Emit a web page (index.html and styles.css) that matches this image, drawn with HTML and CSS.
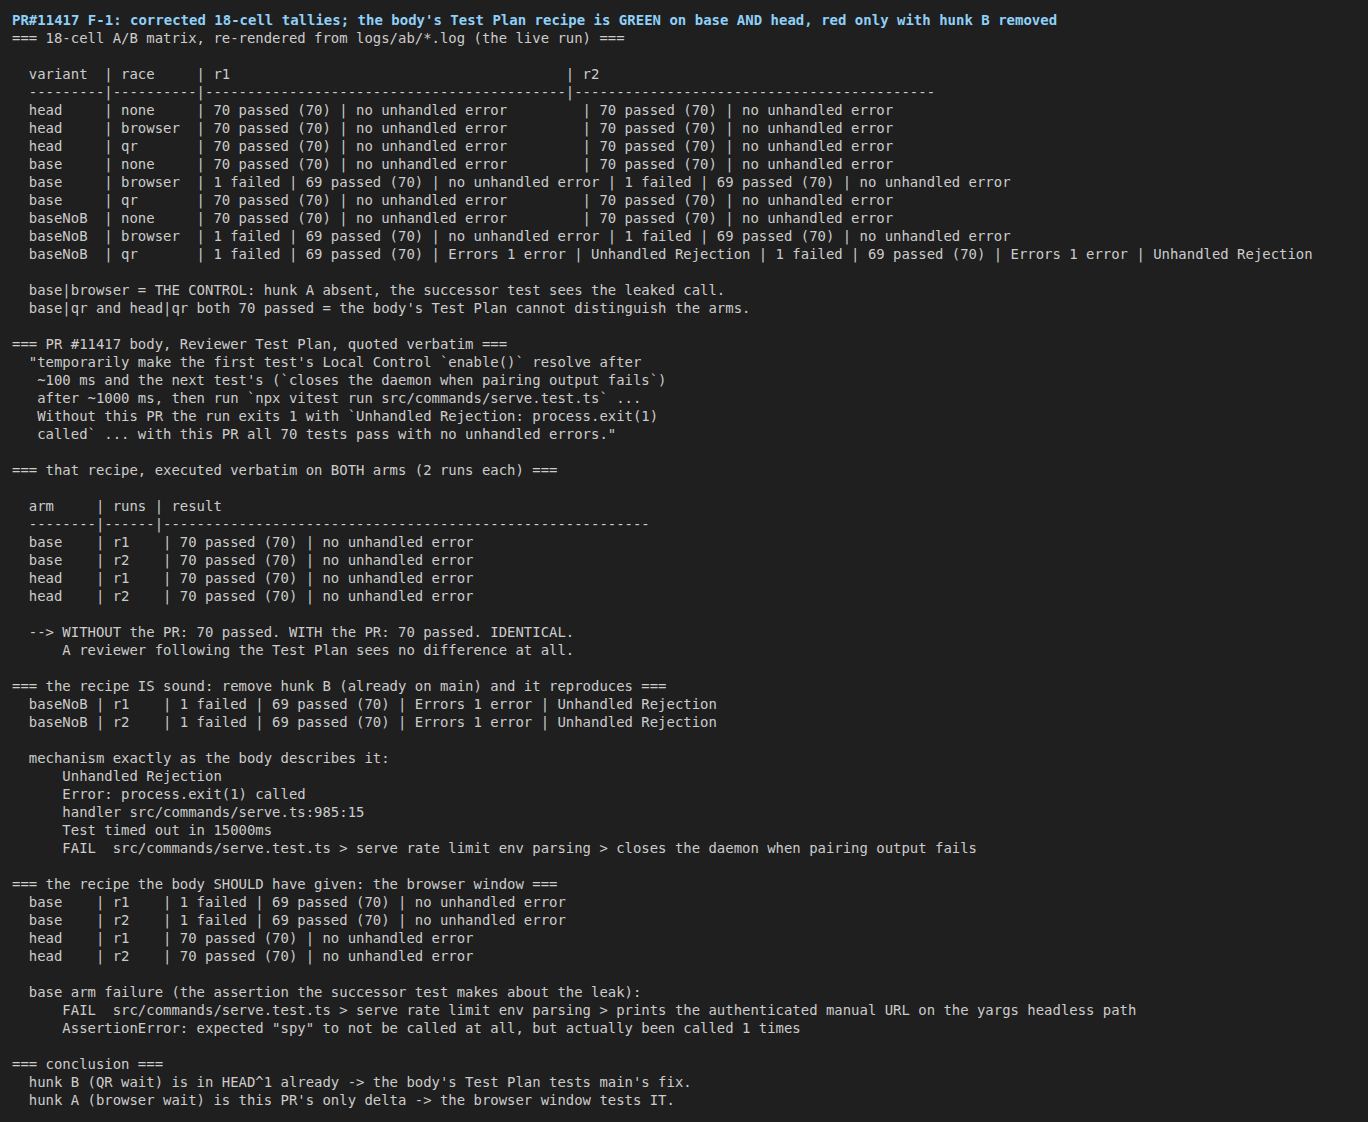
FILE: index.html
```html
<!DOCTYPE html>
<html lang="en">
<head>
<meta charset="utf-8">
<title>PR#11417 F-1</title>
<link rel="stylesheet" href="styles.css">
</head>
<body>
<pre class="log"><span class="title">PR#11417 F-1: corrected 18-cell tallies; the body's Test Plan recipe is GREEN on base AND head, red only with hunk B removed</span>
=== 18-cell A/B matrix, re-rendered from logs/ab/*.log (the live run) ===

  variant  | race     | r1                                        | r2
  ---------|----------|-------------------------------------------|-------------------------------------------
  head     | none     | 70 passed (70) | no unhandled error         | 70 passed (70) | no unhandled error
  head     | browser  | 70 passed (70) | no unhandled error         | 70 passed (70) | no unhandled error
  head     | qr       | 70 passed (70) | no unhandled error         | 70 passed (70) | no unhandled error
  base     | none     | 70 passed (70) | no unhandled error         | 70 passed (70) | no unhandled error
  base     | browser  | 1 failed | 69 passed (70) | no unhandled error | 1 failed | 69 passed (70) | no unhandled error
  base     | qr       | 70 passed (70) | no unhandled error         | 70 passed (70) | no unhandled error
  baseNoB  | none     | 70 passed (70) | no unhandled error         | 70 passed (70) | no unhandled error
  baseNoB  | browser  | 1 failed | 69 passed (70) | no unhandled error | 1 failed | 69 passed (70) | no unhandled error
  baseNoB  | qr       | 1 failed | 69 passed (70) | Errors 1 error | Unhandled Rejection | 1 failed | 69 passed (70) | Errors 1 error | Unhandled Rejection

  base|browser = THE CONTROL: hunk A absent, the successor test sees the leaked call.
  base|qr and head|qr both 70 passed = the body's Test Plan cannot distinguish the arms.

=== PR #11417 body, Reviewer Test Plan, quoted verbatim ===
  "temporarily make the first test's Local Control `enable()` resolve after
   ~100 ms and the next test's (`closes the daemon when pairing output fails`)
   after ~1000 ms, then run `npx vitest run src/commands/serve.test.ts` ...
   Without this PR the run exits 1 with `Unhandled Rejection: process.exit(1)
   called` ... with this PR all 70 tests pass with no unhandled errors."

=== that recipe, executed verbatim on BOTH arms (2 runs each) ===

  arm     | runs | result
  --------|------|----------------------------------------------------------
  base    | r1    | 70 passed (70) | no unhandled error
  base    | r2    | 70 passed (70) | no unhandled error
  head    | r1    | 70 passed (70) | no unhandled error
  head    | r2    | 70 passed (70) | no unhandled error

  --&gt; WITHOUT the PR: 70 passed. WITH the PR: 70 passed. IDENTICAL.
      A reviewer following the Test Plan sees no difference at all.

=== the recipe IS sound: remove hunk B (already on main) and it reproduces ===
  baseNoB | r1    | 1 failed | 69 passed (70) | Errors 1 error | Unhandled Rejection
  baseNoB | r2    | 1 failed | 69 passed (70) | Errors 1 error | Unhandled Rejection

  mechanism exactly as the body describes it:
      Unhandled Rejection
      Error: process.exit(1) called
      handler src/commands/serve.ts:985:15
      Test timed out in 15000ms
      FAIL  src/commands/serve.test.ts &gt; serve rate limit env parsing &gt; closes the daemon when pairing output fails

=== the recipe the body SHOULD have given: the browser window ===
  base    | r1    | 1 failed | 69 passed (70) | no unhandled error
  base    | r2    | 1 failed | 69 passed (70) | no unhandled error
  head    | r1    | 70 passed (70) | no unhandled error
  head    | r2    | 70 passed (70) | no unhandled error

  base arm failure (the assertion the successor test makes about the leak):
      FAIL  src/commands/serve.test.ts &gt; serve rate limit env parsing &gt; prints the authenticated manual URL on the yargs headless path
      AssertionError: expected "spy" to not be called at all, but actually been called 1 times

=== conclusion ===
  hunk B (QR wait) is in HEAD^1 already -&gt; the body's Test Plan tests main's fix.
  hunk A (browser wait) is this PR's only delta -&gt; the browser window tests IT.</pre>
</body>
</html>
```

FILE: styles.css
```css
html, body {
  margin: 0;
  padding: 0;
  background: #1f1f1f;
  min-height: 100%;
}

body {
  min-height: 1122px;
}

.log {
  margin: 0;
  padding: 11px 12px;
  font-family: "DejaVu Sans Mono", "Liberation Mono", monospace;
  font-size: 13.95px;
  line-height: 18px;
  color: #cccccc;
  white-space: pre;
}

.title {
  color: #8fd0f8;
  font-weight: bold;
  font-size: 14px;
}
```
